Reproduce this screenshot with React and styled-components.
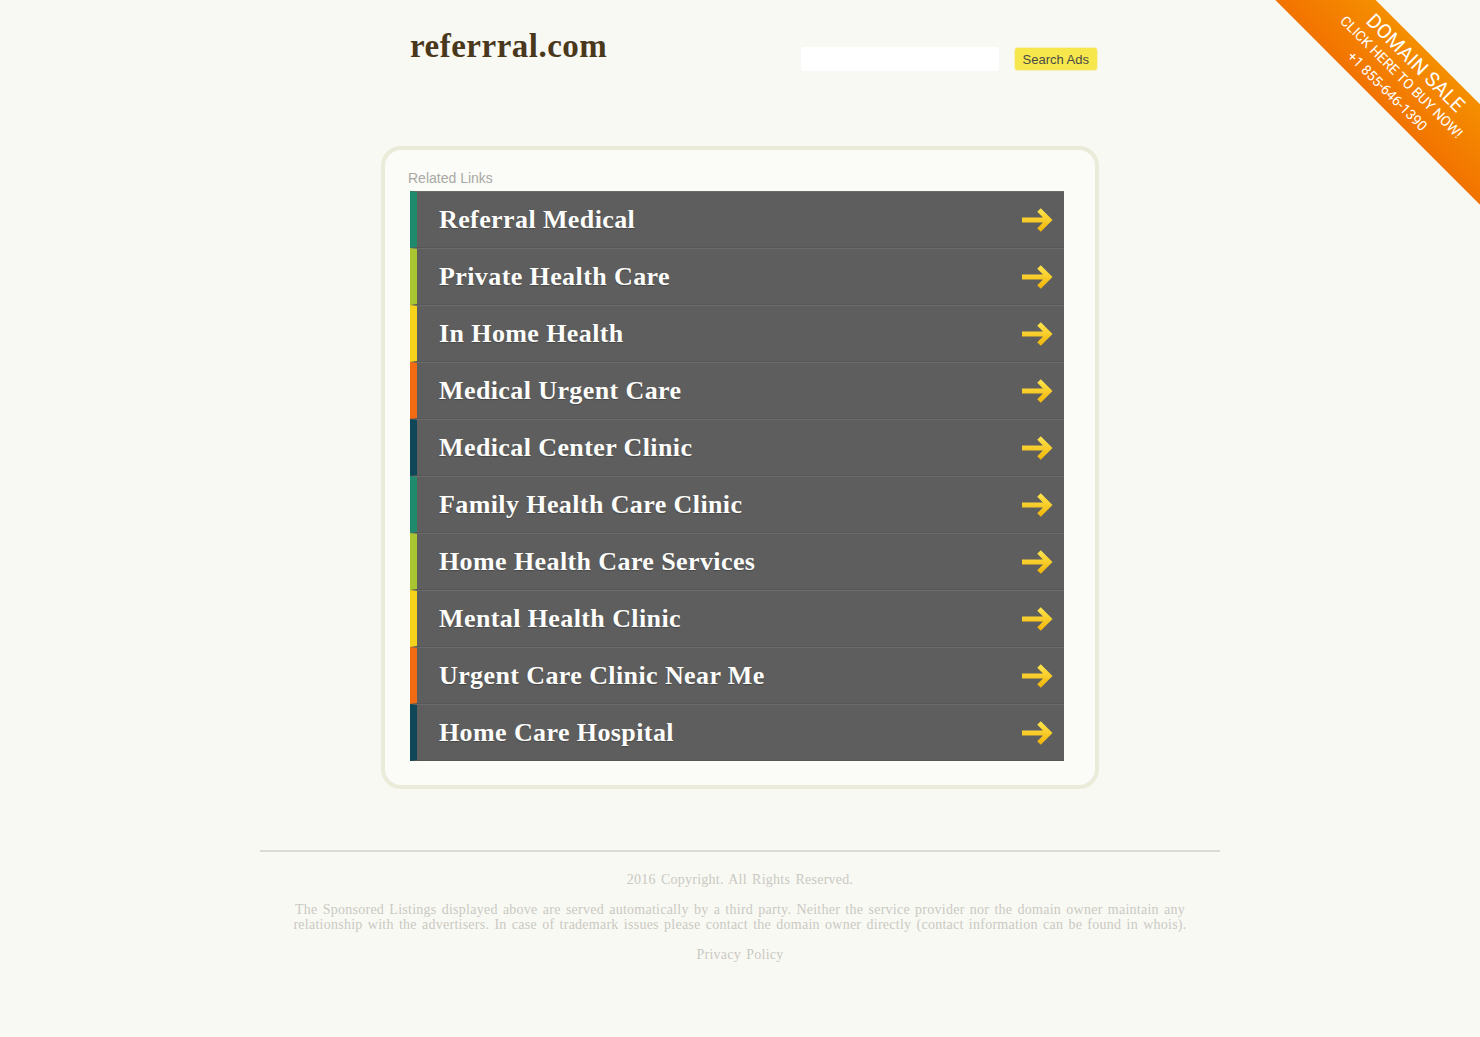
import React from "react";
import styled, { createGlobalStyle } from "styled-components";

const GlobalStyle = createGlobalStyle`
  html, body {
    margin: 0;
    padding: 0;
    background: #f9f9f4;
  }
  body {
    font-family: "Liberation Serif", "Times New Roman", serif;
    min-height: 1037px;
    position: relative;
    overflow: hidden;
  }
`;

const links = [
  { title: "Referral Medical", color: "#1f8a6c" },
  { title: "Private Health Care", color: "#a9c530" },
  { title: "In Home Health", color: "#f7d21a" },
  { title: "Medical Urgent Care", color: "#f26a12" },
  { title: "Medical Center Clinic", color: "#0f4658" },
  { title: "Family Health Care Clinic", color: "#1f8a6c" },
  { title: "Home Health Care Services", color: "#a9c530" },
  { title: "Mental Health Clinic", color: "#f7d21a" },
  { title: "Urgent Care Clinic Near Me", color: "#f26a12" },
  { title: "Home Care Hospital", color: "#0f4658" },
];

const Page = styled.div`
  width: 960px;
  margin: 0 auto;
  display: flex;
  flex-direction: column;
  align-items: center;
`;

const Header = styled.header`
  width: 718px;
  box-sizing: border-box;
  padding: 27px 2px 0 29px;
  height: 146px;
  display: flex;
  align-items: flex-start;
  justify-content: space-between;
`;

const Logo = styled.a`
  font-family: "Liberation Serif", serif;
  font-weight: bold;
  font-size: 33px;
  line-height: 38px;
  color: #4a381c;
  text-decoration: none;
  letter-spacing: 0.5px;
`;

const SearchForm = styled.form`
  display: flex;
  align-items: center;
  gap: 16px;
  margin-top: 20px;
`;

const SearchInput = styled.input`
  width: 198px;
  height: 24px;
  box-sizing: border-box;
  border: none;
  border-radius: 3px;
  background: #ffffff;
  outline: none;
`;

const SearchButton = styled.button`
  height: 22px;
  padding: 0 8px;
  border: none;
  border-radius: 3px;
  background: #f6e84c;
  box-shadow: 0 0 2px #f0dc3a;
  color: #4a4a4a;
  font-family: "Liberation Sans", Arial, sans-serif;
  font-size: 13px;
  cursor: pointer;
`;

const Panel = styled.section`
  width: 718px;
  box-sizing: border-box;
  border: 4px solid #eaebd9;
  border-radius: 20px;
  background: #fbfbf7;
  padding: 20px 31px 24px 25px;
`;

const PanelTitle = styled.h2`
  margin: 0 0 4px -2px;
  font-family: "Liberation Sans", Arial, sans-serif;
  font-weight: normal;
  font-size: 14px;
  line-height: 17px;
  color: #a9a9a4;
`;

const LinkList = styled.ul`
  list-style: none;
  margin: 0;
  padding: 0;
`;

const LinkRow = styled.li`
  height: 57px;
  box-sizing: border-box;
  display: flex;
  align-items: center;
  justify-content: space-between;
  background: #5e5e5e;
  border-left: 7px solid ${(p) => p.$accent};
  border-top: 1px solid #6b6b6b;
  border-bottom: 1px solid #575757;
  padding: 0 10px 0 22px;
  cursor: pointer;
`;

const LinkTitle = styled.span`
  font-family: "Liberation Serif", serif;
  font-weight: bold;
  font-size: 26px;
  color: #fdfdfb;
  text-shadow: 0 1px 1px rgba(0, 0, 0, 0.25);
  letter-spacing: 0.4px;
`;

const Arrow = () => (
  <svg width="34" height="28" viewBox="0 0 34 28">
    <defs>
      <linearGradient id="arrowFill" x1="0" y1="0" x2="0" y2="1">
        <stop offset="0" stopColor="#fde24a" />
        <stop offset="1" stopColor="#f2b80c" />
      </linearGradient>
    </defs>
    <path
      d="M2 14 H29 M19 4 L29 14 L19 24"
      fill="none"
      stroke="url(#arrowFill)"
      strokeWidth="5"
      strokeLinecap="butt"
      strokeLinejoin="miter"
    />
  </svg>
);

const Footer = styled.footer`
  width: 960px;
  margin-top: 61px;
  border-top: 2px solid #dcdcd4;
  padding-top: 20px;
  display: flex;
  flex-direction: column;
  align-items: center;
  text-align: center;
  color: #c9c9c2;
  font-size: 14px;
  line-height: 15px;
  letter-spacing: 0.25px;
  word-spacing: 1.5px;
`;

const FooterLine = styled.p`
  margin: 0 0 15px;
  max-width: 912px;
`;

const FooterLink = styled.a`
  color: #c9c9c2;
  text-decoration: none;
`;

const Corner = styled.div`
  position: absolute;
  top: 0;
  right: 0;
  width: 210px;
  height: 210px;
  overflow: hidden;
  pointer-events: none;
`;

const Ribbon = styled.a`
  position: absolute;
  left: -68px;
  top: 41px;
  width: 400px;
  height: 71px;
  transform: rotate(45deg);
  background: linear-gradient(to bottom, #f58f00, #f27300);
  display: flex;
  flex-direction: column;
  align-items: center;
  justify-content: center;
  color: #ffffff;
  font-family: Roboto, "Liberation Sans", sans-serif;
  text-decoration: none;
  pointer-events: auto;
`;

const RibbonLine = styled.span`
  font-size: ${(p) => (p.$big ? "20px" : "14px")};
  line-height: 20px;
  white-space: nowrap;
`;

export default function App() {
  return (
    <>
      <GlobalStyle />
      <Page>
        <Header>
          <Logo href="#">referrral.com</Logo>
          <SearchForm onSubmit={(e) => e.preventDefault()}>
            <SearchInput type="text" />
            <SearchButton type="submit">Search Ads</SearchButton>
          </SearchForm>
        </Header>
        <Panel>
          <PanelTitle>Related Links</PanelTitle>
          <LinkList>
            {links.map((l) => (
              <LinkRow key={l.title} $accent={l.color}>
                <LinkTitle>{l.title}</LinkTitle>
                <Arrow />
              </LinkRow>
            ))}
          </LinkList>
        </Panel>
        <Footer>
          <FooterLine>2016 Copyright. All Rights Reserved.</FooterLine>
          <FooterLine>
            The Sponsored Listings displayed above are served automatically by a
            third party. Neither the service provider nor the domain owner
            maintain any relationship with the advertisers. In case of trademark
            issues please contact the domain owner directly (contact information
            can be found in whois).
          </FooterLine>
          <FooterLine>
            <FooterLink href="#">Privacy Policy</FooterLink>
          </FooterLine>
        </Footer>
      </Page>
      <Corner>
        <Ribbon href="#">
          <RibbonLine $big>DOMAIN SALE</RibbonLine>
          <RibbonLine>CLICK HERE TO BUY NOW!</RibbonLine>
          <RibbonLine>+1 855-646-1390</RibbonLine>
        </Ribbon>
      </Corner>
    </>
  );
}
